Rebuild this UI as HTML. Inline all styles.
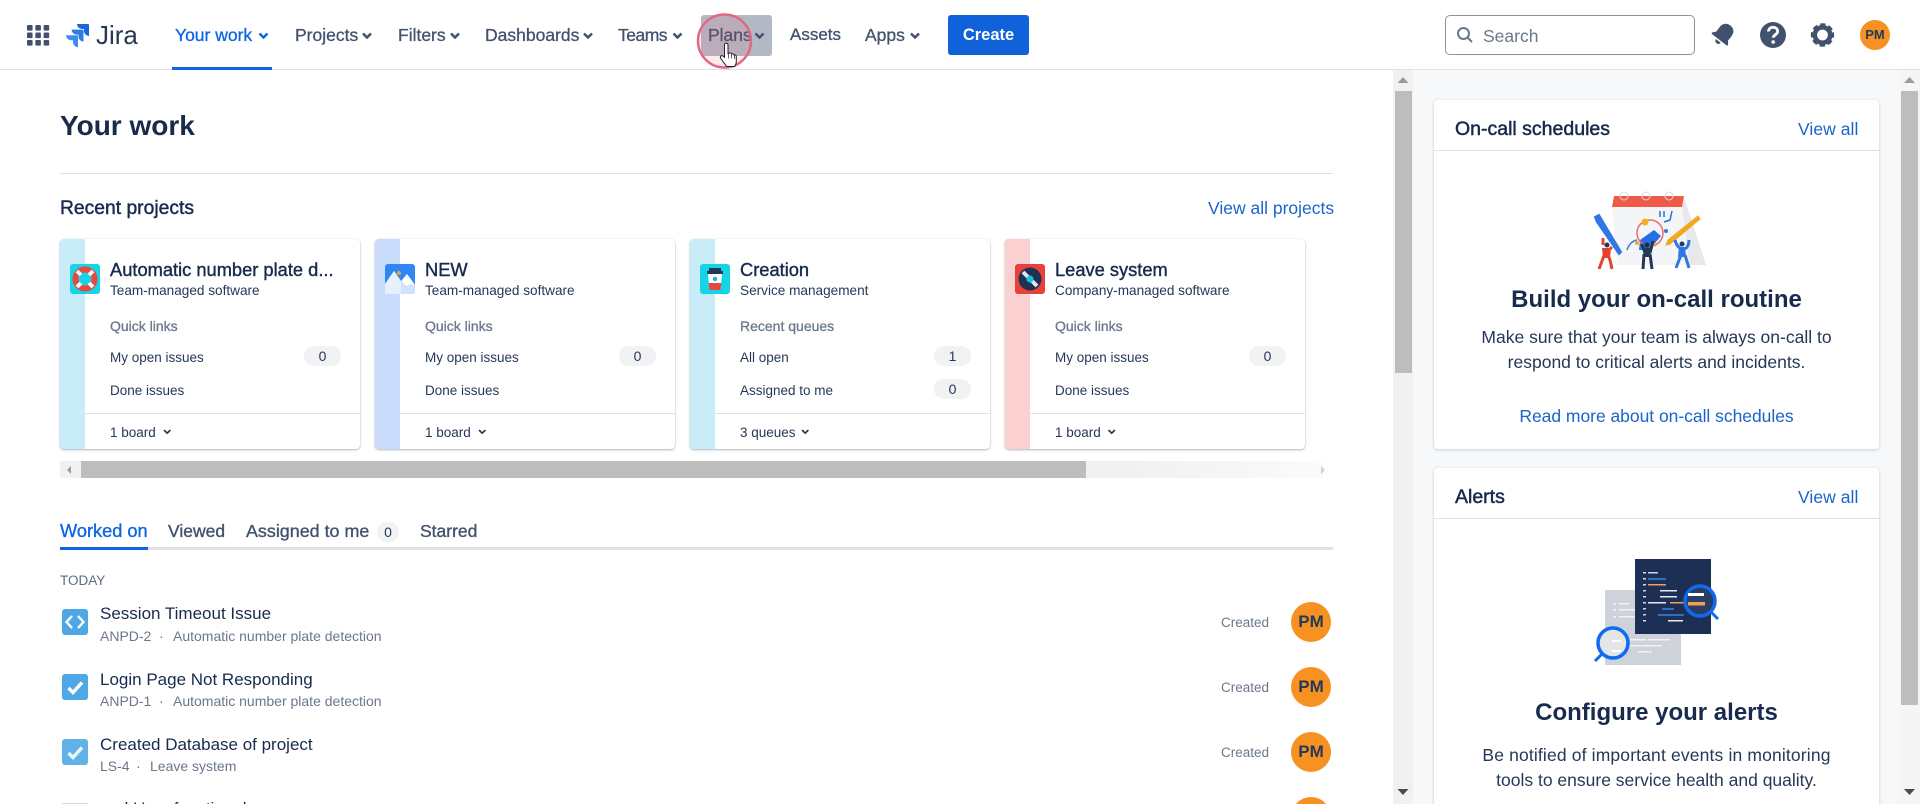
<!DOCTYPE html>
<html lang="en">
<head>
<meta charset="utf-8">
<title>Your work - Jira</title>
<style>
html,body{margin:0;padding:0;width:1920px;height:804px;overflow:hidden;background:#fff;font-family:"Liberation Sans",Arial,sans-serif;color:#172b4d}
*{box-sizing:border-box}
#page{position:relative;width:1920px;height:804px;overflow:hidden;background:#fff;filter:blur(.3px)}
.t{position:absolute;white-space:nowrap;line-height:20px;height:20px}
.box{position:absolute}
.nav{font-size:17.5px;color:#42526e;-webkit-text-stroke:.3px #42526e;text-decoration:none}
.link{color:#1c64c9;text-decoration:none;font-size:17.5px}
.card{position:absolute;top:239px;width:300px;height:210px;background:#fff;border-radius:4px;box-shadow:0 1px 2px rgba(9,30,66,.3),0 0 1px rgba(9,30,66,.15);overflow:hidden}
.band{position:absolute;left:0;top:0;bottom:0;width:25px}
.card .t{left:50px}
.ct{font-size:18.3px;top:21px;-webkit-text-stroke:.4px #172b4d}
.cs{font-size:13.6px;top:42px;color:#253858}
.ch{font-size:14px;top:77px;color:#6b778c;-webkit-text-stroke:.3px #6b778c}
.r1{font-size:13.5px;top:109px;color:#253858}
.r2{font-size:13.5px;top:142px;color:#253858}
.ft{font-size:13.5px;top:184px;color:#253858}
.line{position:absolute;left:25px;right:0;top:174px;height:1px;background:#dfe1e6}
.badge{position:absolute;left:244px;width:37px;height:20px;border-radius:10px;background:#f1f2f4;font-size:14px;line-height:21px;text-align:center;color:#253858}
.tab{font-size:17.5px;top:521px;color:#42526e;-webkit-text-stroke:.35px #42526e}
.title{font-size:17px;left:100px;color:#172b4d}
.sub{font-size:14px;color:#6b778c}
.created{font-size:13.5px;left:1221px;color:#6b778c}
.av{position:absolute;left:1291px;width:40px;height:40px;border-radius:50%;background:#f79122;color:#253858;font-weight:bold;font-size:17px;line-height:40px;text-align:center}
.panel{position:absolute;left:1434px;width:445px;background:#fff;border-radius:4px;box-shadow:0 1px 3px rgba(9,30,66,.2)}
.ph{font-size:19.5px;left:1455px;color:#172b4d;-webkit-text-stroke:.5px #172b4d}
.va{left:1798px;letter-spacing:.05px}
.h2{position:absolute;left:1434px;width:445px;text-align:center;font-size:24px;font-weight:bold;line-height:30px;color:#172b4d}
.p{position:absolute;left:1434px;width:445px;text-align:center;font-size:17.5px;line-height:25px;color:#253858}
</style>
</head>
<body>
<div id="page">

<!-- top nav boxes -->
<div class="box" style="left:0;top:69px;width:1920px;height:1px;background:#dfe1e6"></div>
<div class="box" style="left:172px;top:67px;width:100px;height:3px;background:#0c66e4"></div>
<div class="box" style="left:701px;top:15px;width:71px;height:41px;background:#b3b9c4;border-radius:3px"></div>
<a class="box" style="left:948px;top:15px;width:81px;height:40px;background:#0f62d9;border-radius:3px;color:#fff;font-weight:bold;font-size:16.5px;line-height:41px;text-align:center;text-decoration:none">Create</a>
<div class="box" style="left:1445px;top:15px;width:250px;height:40px;border:1px solid #8993a4;border-radius:5px;background:#fff"></div>

<!-- right panel background + scrollbars -->
<div class="box" style="left:1393px;top:70px;width:20px;height:734px;background:#f1f1f1"></div>
<div class="box" style="left:1395px;top:91px;width:17px;height:282px;background:#bdbdbd"></div>
<div class="box" style="left:1413px;top:70px;width:487px;height:734px;background:#f7f8f9"></div>
<div class="box" style="left:1900px;top:70px;width:20px;height:734px;background:#f5f5f6"></div>
<div class="box" style="left:1901px;top:91px;width:17px;height:614px;background:#bdbdbd"></div>

<!-- panels -->
<div class="panel" style="top:100px;height:349px"></div>
<div class="box" style="left:1434px;top:150px;width:445px;height:1px;background:#dfe1e6"></div>
<div class="panel" style="top:468px;height:346px"></div>
<div class="box" style="left:1434px;top:518px;width:445px;height:1px;background:#dfe1e6"></div>

<!-- main dividers -->
<div class="box" style="left:60px;top:173px;width:1273px;height:1px;background:#dfe1e6"></div>
<div class="box" style="left:60px;top:547px;width:1273px;height:3px;background:#dfe1e6"></div>
<div class="box" style="left:60px;top:547px;width:88px;height:3px;background:#0c66e4"></div>

<!-- horizontal scrollbar -->
<div class="box" style="left:60px;top:461px;width:1263px;height:17px;background:linear-gradient(90deg,#f1f1f1 0,#f1f1f1 85%,#fbfbfb 100%)"></div>
<div class="box" style="left:81px;top:461px;width:1005px;height:17px;background:#bdbdbd"></div>

<!-- project cards -->
<div class="card" style="left:60px">
  <div class="band" style="background:#c8edf9"></div>
  <div class="t ct">Automatic number plate d...</div>
  <div class="t cs">Team-managed software</div>
  <div class="t ch">Quick links</div>
  <div class="t r1">My open issues</div>
  <div class="badge" style="top:107px">0</div>
  <div class="t r2">Done issues</div>
  <div class="line"></div>
  <div class="t ft">1 board</div>
</div>
<div class="card" style="left:375px">
  <div class="band" style="background:#cadcfb"></div>
  <div class="t ct">NEW</div>
  <div class="t cs">Team-managed software</div>
  <div class="t ch">Quick links</div>
  <div class="t r1">My open issues</div>
  <div class="badge" style="top:107px">0</div>
  <div class="t r2">Done issues</div>
  <div class="line"></div>
  <div class="t ft">1 board</div>
</div>
<div class="card" style="left:690px">
  <div class="band" style="background:#c8edf9"></div>
  <div class="t ct">Creation</div>
  <div class="t cs">Service management</div>
  <div class="t ch">Recent queues</div>
  <div class="t r1">All open</div>
  <div class="badge" style="top:107px">1</div>
  <div class="t r2">Assigned to me</div>
  <div class="badge" style="top:140px">0</div>
  <div class="line"></div>
  <div class="t ft">3 queues</div>
</div>
<div class="card" style="left:1005px">
  <div class="band" style="background:#fbd0d0"></div>
  <div class="t ct">Leave system</div>
  <div class="t cs">Company-managed software</div>
  <div class="t ch">Quick links</div>
  <div class="t r1">My open issues</div>
  <div class="badge" style="top:107px">0</div>
  <div class="t r2">Done issues</div>
  <div class="line"></div>
  <div class="t ft">1 board</div>
</div>

<!-- graphics -->
<svg class="box" style="left:0;top:0" width="1920" height="804" viewBox="0 0 1920 804">
  <!-- app grid -->
  <g fill="#42526e">
    <rect x="27" y="25" width="5.6" height="5.6" rx="1"/><rect x="35.3" y="25" width="5.6" height="5.6" rx="1"/><rect x="43.6" y="25" width="5.6" height="5.6" rx="1"/>
    <rect x="27" y="32.5" width="5.6" height="5.6" rx="1"/><rect x="35.3" y="32.5" width="5.6" height="5.6" rx="1"/><rect x="43.6" y="32.5" width="5.6" height="5.6" rx="1"/>
    <rect x="27" y="40" width="5.6" height="5.6" rx="1"/><rect x="35.3" y="40" width="5.6" height="5.6" rx="1"/><rect x="43.6" y="40" width="5.6" height="5.6" rx="1"/>
  </g>
  <!-- jira mark -->
  <g transform="translate(65,24)">
    <path fill="#1868db" d="M23 0H12a5 5 0 0 0 5 5h2v2a5 5 0 0 0 5 5V1a1 1 0 0 0-1-1z"/>
    <path fill="#2a7de9" d="M17.5 5.6H6.5a5 5 0 0 0 5 5h2v2a5 5 0 0 0 5 5V6.6a1 1 0 0 0-1-1z"/>
    <path fill="#3d8df2" d="M12 11.2H1a5 5 0 0 0 5 5h2v2a5 5 0 0 0 5 5V12.2a1 1 0 0 0-1-1z"/>
  </g>
  <!-- nav chevrons -->
  <g fill="none" stroke-width="2.5" stroke-linecap="butt" stroke-linejoin="miter">
    <path stroke="#0c66e4" d="M259.500 33.500l4 4 4-4"/>
    <path stroke="#42526e" d="M363 33.500l4 4 4-4M451 33.500l4 4 4-4M584 33.500l4 4 4-4M673.500 33.500l4 4 4-4M755.500 33.500l4 4 4-4M911 33.500l4 4 4-4"/>
  </g>
  <!-- search icon -->
  <g fill="none" stroke="#6b778c" stroke-width="2">
    <circle cx="1463.500" cy="33.500" r="5.500"/><path d="M1467.500 37.500l4 4" stroke-linecap="round"/>
  </g>
  <!-- bell -->
  <g transform="rotate(38 1723 35)" fill="#42526e">
    <path d="M1723 23c-5 0-7.500 3.500-7.500 8v5.500l-2.500 3v1.500h20v-1.500l-2.500-3V31c0-4.500-2.500-8-7.500-8z"/>
    <path d="M1720 42.500h6c0 1.800-1.300 3-3 3s-3-1.200-3-3z"/>
  </g>
  <!-- help -->
  <circle cx="1773" cy="35" r="13" fill="#42526e"/>
  <path d="M1768.500 31.500c0-2.500 2-4.200 4.600-4.200s4.500 1.600 4.500 4c0 3.600-4.400 3.400-4.400 6.500" fill="none" stroke="#fff" stroke-width="2.800"/>
  <circle cx="1773.200" cy="42" r="1.800" fill="#fff"/>
  <!-- gear -->
  <g fill="none" stroke="#42526e">
    <circle cx="1822.500" cy="35" r="7.700" stroke-width="4.600"/>
    <circle cx="1822.500" cy="35" r="10" stroke-width="3.400" stroke-dasharray="5 2.850" transform="rotate(-14 1822.500 35)"/>
  </g>
  <!-- avatar -->
  <circle cx="1875" cy="35" r="15" fill="#f79122"/>
  <!-- project icon 1: life ring -->
  <rect x="70" y="264" width="30" height="30" rx="3" fill="#14d5e6"/>
  <circle cx="85" cy="279" r="9.500" fill="none" stroke="#e8483f" stroke-width="6"/>
  <g stroke="#f4f5f7" stroke-width="4"><path d="M77 271l4 4M93 271l-4 4M77 287l4-4M93 287l-4-4"/></g>
  <!-- project icon 2: mountains -->
  <rect x="385" y="264" width="30" height="30" rx="3" fill="#2f86f5"/>
  <path d="M385 284l9-13 7 10 6-7 8 11v6a3 3 0 0 1-3 3h-24a3 3 0 0 1-3-3z" fill="#cfe3fb"/>
  <path d="M394 271l7 10v13h-16v-10z" fill="#e6f1fd"/>
  <path d="M407 274l8 11-5-1-3 2-3-2-2-3z" fill="#fff"/>
  <circle cx="399" cy="273" r="2" fill="#f5a623"/>
  <!-- project icon 3: cup -->
  <rect x="700" y="264" width="30" height="30" rx="3" fill="#14d5e6"/>
  <path d="M709 268h12v3h2v3h-16v-3h2z" fill="#253858"/>
  <path d="M708 274h14l-1.500 16h-11z" fill="#fff"/>
  <path d="M708.700 283h12.600l-.8 7h-11z" fill="#e8483f"/>
  <circle cx="715" cy="279" r="2.200" fill="#14b5d6"/>
  <!-- project icon 4: record -->
  <rect x="1015" y="264" width="30" height="30" rx="3" fill="#e8403a"/>
  <circle cx="1030" cy="279" r="11.500" fill="#1f3050"/>
  <path d="M1023 272l14 14" stroke="#dfe6ee" stroke-width="4"/>
  <circle cx="1030" cy="279" r="3.500" fill="#14c5de"/>
  <!-- card chevrons -->
  <g fill="none" stroke="#253858" stroke-width="1.700" stroke-linecap="round" stroke-linejoin="round">
    <path d="M164.500 430.500l2.700 2.700 2.700-2.700M479.500 430.500l2.700 2.700 2.700-2.700M802.500 430.500l2.700 2.700 2.700-2.700M1109 430.500l2.700 2.700 2.700-2.700"/>
  </g>
  <!-- scroll arrows -->
  <g fill="#9a9aa5">
    <path d="M1403 77l-5.500 6h11zM1909.500 77l-5.500 6h11z"/>
    <path d="M71 466v8l-4-4z"/>
    <path d="M1321 466v8l4-4z" fill="#d0d0d0"/>
  </g>
  <g fill="#4a4a55">
    <path d="M1403 795l-5.500-6h11zM1909.500 795l-5.500-6h11z"/>
  </g>
  <!-- issue icons -->
  <rect x="62" y="609" width="26" height="26" rx="3" fill="#4fa8e6"/>
  <path d="M72 616l-5.500 6 5.500 6M78 616l5.500 6-5.500 6" fill="none" stroke="#fff" stroke-width="2.400"/>
  <rect x="62" y="674" width="26" height="26" rx="3" fill="#4fa8e6"/>
  <path d="M68.500 688l4.500 4.500 9-10" fill="none" stroke="#fff" stroke-width="3.400"/>
  <rect x="62" y="739" width="26" height="26" rx="3" fill="#62b2ea"/>
  <path d="M68.500 753l4.500 4.500 9-10" fill="none" stroke="#eef7fd" stroke-width="3.400"/>
  <rect x="62" y="803" width="26" height="4" rx="1" fill="#d5d8dd"/>

  <!-- on-call illustration -->
  <path d="M1612 207h70l20 58h-85z" fill="#f4f5f7"/>
  <path d="M1684 197l22 68h-16l-8-58z" fill="#e6e8ec"/>
  <path d="M1614 196h70l-2 11h-70z" fill="#ef5b48"/>
  <g fill="none" stroke="#d8dce2" stroke-width="1"><circle cx="1624" cy="196" r="4"/><circle cx="1646" cy="196" r="4"/><circle cx="1669" cy="196" r="4"/></g>
  <path d="M1595 217l4-2 22 37-2 2-22-32z" fill="#2f78e4" stroke="#2f78e4" stroke-width="2"/>
  <path d="M1698 216l2 3-30 25-4 1 2-5z" fill="#f2a91f" stroke="#f2a91f" stroke-width="1"/>
  <path d="M1640 240l14-10 7 6-12 14h-10z" fill="#2370e6"/>
  <circle cx="1650" cy="233" r="13" fill="none" stroke="#ef6a6a" stroke-width="1.500"/>
  <circle cx="1645" cy="222" r="3.500" fill="#f2b01f"/>
  <path d="M1627 250c2-6 5-9 10-10" fill="none" stroke="#3a7de0" stroke-width="1.500"/>
  <path d="M1672 211l-2 9-6 2M1660 211v6M1664 211v6" fill="none" stroke="#2370e6" stroke-width="1.500"/>
  <circle cx="1666" cy="231" r="2" fill="#2f78e4"/>
  <g fill="#f2a91f"><circle cx="1637" cy="243" r="2"/><circle cx="1655" cy="245" r="1.500"/></g>
  <!-- person red -->
  <g stroke="#e2442f" stroke-width="3" fill="none"><path d="M1603 238v7M1612 247l-5 5M1606 250l-4 11-3 8M1606 250l4 10 2 9"/></g>
  <path d="M1602 248h9l-1 10h-7z" fill="#e2442f"/><circle cx="1607" cy="245" r="2.500" fill="#253858"/>
  <!-- person dark -->
  <g stroke="#253858" stroke-width="3" fill="none"><path d="M1642 244l3 9M1653 241l-3 12M1644 254l-1 15M1650 254l2 15"/></g>
  <circle cx="1647" cy="245" r="2.500" fill="#1c2b46"/><path d="M1643 248h8l-1 9h-6z" fill="#253858"/>
  <!-- person blue -->
  <g stroke="#2f78e4" stroke-width="3" fill="none"><path d="M1675 240c1 4 3 7 5 8M1689 240c0 4-1 7-4 9M1681 255l-5 13M1685 255l4 13"/></g>
  <path d="M1679 247h6l1 10h-8z" fill="#2f78e4"/><circle cx="1682" cy="244" r="2.500" fill="#253858"/>

  <!-- alerts illustration -->
  <rect x="1605" y="590" width="76" height="75" fill="#ced2da"/>
  <g fill="#f1f2f5">
    <rect x="1613" y="603" width="3" height="1.500"/><rect x="1619" y="603" width="10" height="1.500"/>
    <rect x="1613" y="609" width="3" height="1.500"/><rect x="1619" y="609" width="20" height="1.500"/>
    <rect x="1613" y="616" width="3" height="1.500"/><rect x="1619" y="616" width="16" height="1.500"/>
    <rect x="1630" y="639" width="16" height="1.500"/><rect x="1648" y="639" width="22" height="1.500"/>
    <rect x="1630" y="645" width="32" height="1.500"/><rect x="1638" y="651" width="14" height="1.500"/>
  </g>
  <rect x="1635" y="559" width="76" height="75" fill="#1d2f55"/>
  <g>
    <rect x="1643" y="572" width="3" height="1.500" fill="#cfd6e2"/><rect x="1648" y="572" width="10" height="1.500" fill="#cfd6e2"/>
    <rect x="1643" y="578" width="3" height="1.500" fill="#cfd6e2"/><rect x="1648" y="578" width="18" height="2" fill="#2f6fbf"/>
    <rect x="1643" y="584" width="3" height="1.500" fill="#cfd6e2"/><rect x="1648" y="584" width="18" height="1.500" fill="#e8a35c"/>
    <rect x="1643" y="590" width="3" height="1.500" fill="#cfd6e2"/><rect x="1660" y="590" width="17" height="1.500" fill="#e6eaf0"/>
    <rect x="1643" y="596" width="3" height="1.500" fill="#cfd6e2"/><rect x="1660" y="596" width="17" height="1.500" fill="#e6eaf0"/>
    <rect x="1643" y="602" width="3" height="1.500" fill="#cfd6e2"/><rect x="1648" y="602" width="18" height="1.500" fill="#e6eaf0"/><rect x="1670" y="602" width="14" height="1.500" fill="#e8a35c"/>
    <rect x="1643" y="608" width="3" height="1.500" fill="#cfd6e2"/><rect x="1662" y="608" width="12" height="2" fill="#2f6fbf"/>
    <rect x="1643" y="614" width="3" height="1.500" fill="#cfd6e2"/><rect x="1658" y="614" width="26" height="2" fill="#2f6fbf"/>
    <rect x="1643" y="620" width="3" height="1.500" fill="#cfd6e2"/><rect x="1668" y="620" width="15" height="1.500" fill="#e6eaf0"/>
  </g>
  <circle cx="1700" cy="601" r="15" fill="#2a3d63" stroke="#0f6af0" stroke-width="3.500"/>
  <rect x="1688" y="593" width="16" height="3" fill="#fff"/><rect x="1688" y="602" width="17" height="3.500" fill="#f0a052"/>
  <path d="M1711 612l7 7" stroke="#0f6af0" stroke-width="3"/>
  <circle cx="1613" cy="643" r="15" fill="#e3e5e9" stroke="#0f6af0" stroke-width="3.500"/>
  <rect x="1612" y="640" width="9" height="2" fill="#fff"/><rect x="1612" y="650" width="9" height="2" fill="#fff"/>
  <path d="M1602 654l-7 7" stroke="#0f6af0" stroke-width="3"/>
</svg>

<!-- nav text -->
<div class="t" style="left:96px;top:21px;height:28px;line-height:28px;font-size:26px;color:#253858">Jira</div>
<a class="t nav" style="left:175px;top:25px;color:#0c66e4;-webkit-text-stroke:.3px #0c66e4">Your work</a>
<a class="t nav" style="left:295px;top:25px">Projects</a>
<a class="t nav" style="left:398px;top:25px">Filters</a>
<a class="t nav" style="left:485px;top:25px">Dashboards</a>
<a class="t nav" style="left:618px;top:25px;letter-spacing:-.5px">Teams</a>
<a class="t nav" style="left:708px;top:25px">Plans</a>
<a class="t nav" style="left:790px;top:25px;font-size:17px">Assets</a>
<a class="t nav" style="left:865px;top:25px">Apps</a>
<div class="t" style="left:1483px;top:26px;font-size:17.5px;color:#6b778c">Search</div>
<div class="t" style="left:1860px;top:25px;width:30px;text-align:center;font-size:13px;font-weight:bold;color:#253858">PM</div>

<!-- main text -->
<div class="t" style="left:60px;top:108px;height:36px;line-height:36px;font-size:28px;font-weight:bold;color:#172b4d">Your work</div>
<div class="t" style="left:60px;top:199px;font-size:19.3px;color:#172b4d;-webkit-text-stroke:.45px #172b4d">Recent projects</div>
<a class="t link" style="left:1208px;top:198px">View all projects</a>

<div class="t tab" style="left:60px;font-size:18.2px;color:#0c66e4;-webkit-text-stroke:.35px #0c66e4">Worked on</div>
<div class="t tab" style="left:168px">Viewed</div>
<div class="t tab" style="left:246px;font-size:17.9px">Assigned to me</div>
<div class="box" style="left:377px;top:522px;width:22px;height:20px;border-radius:10px;background:#f1f2f4;font-size:14px;line-height:21px;text-align:center;color:#253858">0</div>
<div class="t tab" style="left:420px">Starred</div>

<div class="t" style="left:60px;top:571px;font-size:13.5px;color:#5e6c84">TODAY</div>

<div class="t title" style="top:604px">Session Timeout Issue</div>
<div class="t sub" style="left:100px;top:626px">ANPD-2</div><div class="t sub" style="left:159px;top:626px">·</div><div class="t sub" style="left:173px;top:626px">Automatic number plate detection</div>
<div class="t created" style="top:613px">Created</div>
<div class="av" style="top:602px">PM</div>

<div class="t title" style="top:670px">Login Page Not Responding</div>
<div class="t sub" style="left:100px;top:691px">ANPD-1</div><div class="t sub" style="left:159px;top:691px">·</div><div class="t sub" style="left:173px;top:691px">Automatic number plate detection</div>
<div class="t created" style="top:678px">Created</div>
<div class="av" style="top:667px">PM</div>

<div class="t title" style="top:735px">Created Database of project</div>
<div class="t sub" style="left:100px;top:756px">LS-4</div><div class="t sub" style="left:136px;top:756px">·</div><div class="t sub" style="left:150px;top:756px">Leave system</div>
<div class="t created" style="top:743px">Created</div>
<div class="av" style="top:732px">PM</div>

<div class="t title" style="top:799px">and User functional</div>
<div class="av" style="top:797px"></div>

<!-- right panel text -->
<div class="t ph" style="top:119px">On-call schedules</div>
<a class="t link va" style="top:119px">View all</a>
<div class="h2" style="top:285px">Build your on-call routine</div>
<div class="p" style="top:325px">Make sure that your team is always on-call to</div>
<div class="p" style="top:350px">respond to critical alerts and incidents.</div>
<a class="p" style="top:404px;color:#1c64c9;text-decoration:none;letter-spacing:-.03px">Read more about on-call schedules</a>

<div class="t ph" style="top:487px">Alerts</div>
<a class="t link va" style="top:487px">View all</a>
<div class="h2" style="top:698px">Configure your alerts</div>
<div class="p" style="top:743px;letter-spacing:.15px">Be notified of important events in monitoring</div>
<div class="p" style="top:768px">tools to ensure service health and quality.</div>

<!-- click ring + cursor -->
<svg class="box" style="left:0;top:0" width="1920" height="804" viewBox="0 0 1920 804">
  <circle cx="724.500" cy="41" r="26.500" fill="rgba(235,90,110,.12)" stroke="#e4687f" stroke-width="2.500"/>
  <path d="M724.500 45c0-2.500 3.500-2.500 3.500 0v8.500l.8-.3c1-.6 2.400-.3 2.700.8 1-.6 2.400-.2 2.600 1 1-.4 2.200.2 2.200 1.500v5.500c0 2-.8 3-1.700 4.500h-8l-5.800-8c-1.300-2 .6-3.600 2.200-2.400l1.500 1.200z" fill="#fff" stroke="#222" stroke-width="1"/>
  <path d="M728.500 53.500v5M731.500 54v4.500M734.500 55v4" stroke="#222" stroke-width=".7" fill="none"/>
</svg>
</div>
</body>
</html>
